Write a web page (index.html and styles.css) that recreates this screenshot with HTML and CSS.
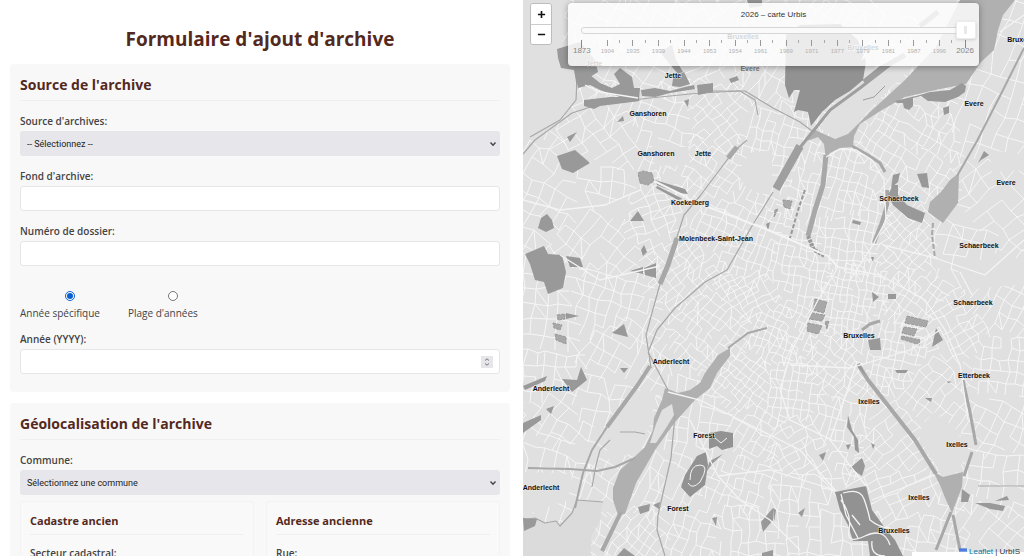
FILE: index.html
```html
<!DOCTYPE html>
<html lang="fr">
<head>
<meta charset="utf-8">
<title>Formulaire d'ajout d'archive</title>
<link rel="stylesheet" href="styles.css">
</head>
<body>
<main class="layout">
  <form class="form-pane">
    <h1 class="page-title">Formulaire d'ajout d'archive</h1>

    <section class="card">
      <h2 class="card-title">Source de l'archive</h2>
      <div class="field">
        <label for="source">Source d'archives:</label>
        <span class="select-box"><select id="source"><option>-- Sélectionnez --</option></select>
          <svg class="chevron" viewBox="0 0 8 6" aria-hidden="true"><path d="M1.5 1.5 4 4.2 6.5 1.5"/></svg></span>
      </div>
      <div class="field">
        <label for="fond">Fond d'archive:</label>
        <input id="fond" type="text">
      </div>
      <div class="field">
        <label for="dossier">Numéro de dossier:</label>
        <input id="dossier" type="text">
      </div>
      <div class="radios">
        <label class="radio"><input type="radio" name="annee-type" checked>Année spécifique</label>
        <label class="radio"><input type="radio" name="annee-type">Plage d'années</label>
      </div>
      <div class="field">
        <label for="annee">Année (YYYY):</label>
        <span class="number-box"><input id="annee" type="number">
          <svg class="spinner" viewBox="0 0 12 12" aria-hidden="true"><path d="M4 4.5 6 2.8 8 4.5M4 7.5 6 9.2 8 7.5"/></svg></span>
      </div>
    </section>

    <section class="card">
      <h2 class="card-title">Géolocalisation de l'archive</h2>
      <div class="field field-tight">
        <label for="commune">Commune:</label>
        <span class="select-box"><select id="commune"><option>Sélectionnez une commune</option></select>
          <svg class="chevron" viewBox="0 0 8 6" aria-hidden="true"><path d="M1.5 1.5 4 4.2 6.5 1.5"/></svg></span>
      </div>
      <div class="columns">
        <section class="subcard">
          <h3 class="subcard-title">Cadastre ancien</h3>
          <div class="field">
            <label for="secteur">Secteur cadastral:</label>
            <input id="secteur" type="text">
          </div>
        </section>
        <section class="subcard">
          <h3 class="subcard-title">Adresse ancienne</h3>
          <div class="field">
            <label for="rue">Rue:</label>
            <input id="rue" type="text">
          </div>
        </section>
      </div>
    </section>
  </form>

  <section class="map-pane" aria-label="Carte">
    <svg class="map" viewBox="523 0 501 556" preserveAspectRatio="xMinYMin slice">
      <g id="streets" class="streets"></g>
      <g class="blank">
        <path d="M523 0H566L562 40 574 70 577 100 560 120 535 140H523z"/>
        <path d="M737 173 750 153 772 150 772 190 762 195 745 186z"/>
        <path d="M603 205 625 197 633 208 622 222 604 215z"/>
        <path d="M652 147 688 147 690 165 655 166z"/>
        <path d="M990 150 1024 155 1024 170 992 172z"/>
        <path d="M922 425 934 412 955 428 968 450 958 472 940 472 920 440z"/>
        <path d="M958 270 1002 250 1024 262V284L962 290z"/>
        <path d="M820 128 838 100 868 82 902 52 952 2H962L948 30 910 70 880 98 850 132 838 139z"/>
        <path d="M602 430 642 388 656 393 650 425 640 449 610 462z"/>
        <path d="M523 472 572 474 568 500 523 516z"/>
      </g>
      <path class="outside" d="M518 521 535 518 545 523 556 521 560 526 572 513 577 500 603 502 600 520 592 535 590 560H518z"/>

      <g class="yard">
        <path d="M960 0H1015L1003 15 998 30 994 50 981 62 966 84 940 89 905 97 882 110 860 124 854 136 853 147 840 148 830 153 826 160 824 144 818 137 807 141 815 130 835 139 848 134 870 112 905 80 935 48 950 20z"/>
        <path d="M959 173 958 203 943 223 928 212 930 202 941 192 950 180z"/>
        <path d="M730 348 718 355 705 373 700 383 690 390 678 393 665 388 662 400 654 418 653 430 645 447 628 463 620 470 613 488 613 500 618 515 625 514 630 500 636 483 655 450 675 422 695 400 710 388 717 373 730 356z"/>
        <path d="M933 471 943 477 963 472 962 487 952 513 946 500 940 485z"/>
      </g>
      <path class="hole" d="M672 404 674 415 666 428 656 443 650 443 656 424 662 410z"/>

      <g class="rail">
        <path d="M523 154 535 140 572 113 600 104 650 98 700 93 740 91 755 100 758 115"/>
        <path d="M577 80 576 100 560 120 530 137"/>
        <path d="M700 91 745 91 773 108 800 122 812 131"/>
        <path d="M747 140 733 152 700 196 684 215 676 240 660 284 650 320 646 335 648 348 651 368"/>
        <path d="M773 192 752 226 727 270 705 282 675 308 657 330 649 350"/>
        <path class="w2" d="M728 348 748 333 767 328"/>
        <path class="w5" d="M677 238 668 265 660 284"/>
        <path class="w5" d="M737 147 728 158"/>
        <path class="w5" d="M826 155 823 185 815 210 808 236"/>
        <path class="w4 dark" d="M808 236 814 250 825 256"/>
        <path class="w3" d="M852 146 868 155 880 163 885 172"/>
        <path class="w4" d="M887 190 887 205 882 222 874 243"/>
        <path class="w2" d="M957 176 977 141 1003 90 1024 48"/>
        <path class="w2 dash" d="M933 223 932 235 935 258"/>
        <path class="w4" d="M650 366 637 386 607 427"/>
        <path class="w2" d="M607 427 592 450 583 473 575 508"/>
        <path class="w2" d="M528 468 570 469 597 471 615 467 635 458"/>
        <path class="w4" d="M621 512 602 551"/>
        <path d="M648 352 668 390"/>
        <path d="M675 415 671 458 658 515 657 530 665 556"/>
        <path d="M518 521 535 518 545 523 556 521 560 526 572 513 577 500 603 502"/>
        <path d="M620 432 635 432 645 434M610 440 600 450 596 465 592 487"/>
        <path class="w4" d="M858 364 868 380 890 408 915 440 936 474"/>
        <path class="w3" d="M963 380 970 412 976 445M972 452 964 476"/>
        <path class="w3" d="M951 512 936 550M953 515 960 550"/>
        <path d="M978 486 1024 486"/>
        <path class="w3" d="M862 330 870 324 880 321"/>
        <path d="M790 42 830 60 850 66"/>
      </g>
      <g class="water">
        <path d="M800 146 776 189" stroke-width="8"/>
        <path d="M864 82 880 69 905 55" stroke-width="5"/>
        <path d="M938 12 920 26" stroke-width="5"/>
        <path d="M900 57 860 88 830 110 806 140 798 150" stroke-width="3"/>
        <path d="M863 100 874 97 885 86" stroke-width="1"/>
      </g>

      <g class="park">
        <path d="M557 49 580 42 595 60 598 72 590 77 579 77 577 88 574 70 561 68 558 58z"/>
        <path d="M578 77 590 75 600 83 612 88 620 84 614 74 620 68 632 77 634 88 640 88 639 100 620 97 600 90 590 85 578 88z"/>
        <path d="M584 100 610 97 635 97 640 101 600 106 594 109 584 106z"/>
        <path d="M641 90 655 88 670 91 685 87 694 85 695 89 670 93 655 97 642 96z"/>
        <path d="M697 85 713 83V92L698 95z"/>
        <path d="M673 78 684 72 690 84 680 87 672 86z"/>
        <path d="M660 52 672 45 676 60 683 72 678 74 668 62z"/>
        <path d="M747 0H762V6L750 8z"/>
        <path d="M729 79 737 76 739 80 731 83zM684 101 689 99 688 107zM617 122 623 116 624 121zM567 137 577 132 570 142z"/>
        <path class="deep" d="M786 35 800 25 840 24 858 40 866 62 863 80 850 91 835 100 822 112 811 126 808 112 798 110 794 112 800 90 794 90 789 98 785 85z"/>
        <path d="M895 101 920 95 930 92 950 90 962 83 966 86 965 92 958 97 945 102 928 101 921 96 913 98 913 106 909 110 904 108 903 103 897 103z"/>
        <path d="M943 108 949 106 949 113 944 115z"/>
        <path d="M557 156 575 150 590 163 573 173 562 169z"/>
        <path d="M541 218 547 214 552 220 554 228 546 232 538 228z"/>
        <path d="M525 254 544 246 548 254 562 255 566 272 563 288 548 294 544 282 535 280 530 264z"/>
        <path d="M566 256 580 258 583 267 570 267z"/>
        <path d="M630 221 638 211 644 221zM641 250 644 245 647 252 643 256zM630 271 643 267V274zM644 268 656 263V278L645 275z"/>
        <path d="M612 333 624 324 628 337z"/>
        <path d="M566 313 579 316 566 319z"/>
        <path d="M655 180 685 189 688 194 678 193 657 185z"/>
        <path d="M657 186 683 199 678 200 656 188z"/>
        <path d="M893 185 898 185 898 195 907 205 925 213 922 223 908 218 893 205 888 195z"/>
        <path d="M917 174 927 173 929 188 922 187zM893 175 900 173 898 182 891 188z"/>
        <path d="M978 163 984 151 989 155 981 160z"/>
        <path d="M853 220 861 222 860 225 852 223zM766 224 770 222 768 231zM871 257 874 257 873 262z"/>
        <path d="M872 292 879 297 873 302zM888 294 896 294 896 299 888 299z"/>
        <path d="M868 340 880 338 881 350 870 350zM936 328 943 340 932 347z"/>
        <path d="M562 379 577 380 581 367 587 380 572 392z"/>
        <path d="M523 386 547 376 545 381 525 390zM523 423 541 415 541 420 523 433zM546 409 554 406 551 414zM620 368 628 368 624 373z"/>
        <path class="deep" d="M709 433 721 431 733 433 733 447 722 450 717 446 709 449z"/>
        <path class="deep" d="M697 456 706 452 708 465 705 485 690 497 681 487 685 475z"/>
        <path d="M706 472 710 461 723 454 713 463z"/>
        <path d="M638 507 650 504 649 511 640 514zM653 505 660 502 659 509zM712 518 717 517 716 526z"/>
        <path d="M523 518 537 519 535 526 524 531zM761 522 773 508V520L763 532zM762 553 773 550V556H762zM617 556 624 548 635 556z"/>
        <path d="M857 366 861 366 866 376zM895 370 908 370 906 373 897 373zM925 398 932 398 931 402zM947 381 952 382 948 383z"/>
        <path d="M848 415 852 430 858 440 859 453 855 450 854 437 847 427z"/>
        <path d="M819 455 826 452 823 461zM846 445 851 444 848 450zM871 443 875 445 873 449zM850 468 862 458 865 466 862 476z"/>
        <path class="deep" d="M835 492 866 486 872 510 885 528 895 540 903 556H870L868 541 853 541 848 525 840 510z"/>
        <path d="M975 503 990 503 1005 506 1003 511 990 509zM962 489 970 495 968 502 961 502zM995 501 1007 496 1009 500zM798 513 805 508 802 517zM773 508 776 510 774 522z"/>
      </g>
      <g class="fine">
        <path d="M638 173 643 171 652 173 654 181 648 185 640 183z"/>
        <path d="M783 200 792 201 790 209 784 207zM775 210 778 209 774 217z"/>
        <path d="M805 190 799 207 790 238" class="line"/>
        <path d="M815 299 827 302 824 313 813 310zM812 313 825 315 822 321 809 319zM808 323 822 326 818 334 807 331zM825 322 829 321 827 329z"/>
        <path d="M907 316 928 321 926 327 905 323zM904 327 917 329 914 336 902 333zM902 336 920 340 920 345 901 339z"/>
        <path d="M557 315 565 314V319L558 320zM553 323 562 325 560 330 554 328zM555 334 566 337V344L556 340z"/>
      </g>
      <g class="avenues">
        <path d="M654 181 685 196 690 200 768 230 828 256 838 267" stroke-width="2"/>
        <path d="M870 0 885 15 862 60M1024 15 1000 32"/>
        <path d="M826 157 840 149 856 150 872 160 884 180 886 220 873 245 850 280"/>
        <path d="M838 267 818 300 792 350 780 390 790 420 832 440"/>
        <path d="M838 267 880 275 925 300 945 330 960 365 968 420"/>
        <path d="M883 245 935 258 985 275 1024 240M960 272 972 295"/>
        <path d="M790 365 850 368 910 350 940 330"/>
        <path d="M668 392 700 400 740 420 800 450 835 490"/>
        <path d="M718 476 740 500 770 520 800 550M718 476 690 420M718 476 770 470 835 490"/>
        <path d="M841 494 846 515 858 538M843 493Q860 488 864 499T870 520Q880 528 890 528M841 500Q852 515 849 530T865 536 890 545" />
        <path d="M866 486 830 440 857 362M872 500 935 475M523 200 560 210 605 205 640 190M560 255 600 280 660 266"/>
        <path d="M690 480Q690 465 700 465T700 482Q692 490 688 483M715 438 721 443 727 438" stroke-width="1"/>
        <path d="M860 525 852 515M872 541Q870 556 885 556M585 85 600 92 638 98"/>
      </g>

      <g class="places">
        <text x="743" y="39">Bruxelles</text><text x="863" y="50">Bruxelles</text>
        <text x="594" y="66">Jette</text><text x="750" y="71" class="faint">Evere</text>
        <text x="673" y="78">Jette</text><text x="648" y="116">Ganshoren</text>
        <text x="656" y="156">Ganshoren</text><text x="703" y="156">Jette</text>
        <text x="690" y="205">Koekelberg</text><text x="716" y="241">Molenbeek-Saint-Jean</text>
        <text x="1023" y="42">Bruxelles</text><text x="974" y="106">Evere</text>
        <text x="1006" y="185">Evere</text><text x="899" y="201">Schaerbeek</text>
        <text x="979" y="248">Schaerbeek</text><text x="973" y="305">Schaerbeek</text>
        <text x="859" y="338">Bruxelles</text><text x="671" y="364">Anderlecht</text>
        <text x="551" y="391">Anderlecht</text><text x="541" y="490">Anderlecht</text>
        <text x="974" y="378">Etterbeek</text><text x="869" y="404">Ixelles</text>
        <text x="957" y="447">Ixelles</text><text x="919" y="500">Ixelles</text>
        <text x="704" y="438">Forest</text><text x="678" y="511">Forest</text>
        <text x="894" y="533">Bruxelles</text>
      </g>
    </svg>

    <div class="zoom-control">
      <button type="button" aria-label="Zoom avant"><svg viewBox="0 0 10 10"><path d="M1 5H9M5 1V9"/></svg></button>
      <button type="button" aria-label="Zoom arrière"><svg viewBox="0 0 10 10"><path d="M1 5H9"/></svg></button>
    </div>

    <div class="timeline">
      <label class="timeline-title" for="year">2026 – carte Urbis</label>
      <div class="slider">
        <span class="slider-rail"></span>
        <input id="year" type="range" min="0" max="15" value="15">
      </div>
      <ol class="ticks">
        <li class="end">1873</li><li>1904</li><li>1935</li><li>1939</li><li>1944</li><li>1953</li><li>1954</li><li>1961</li><li>1969</li><li>1971</li><li>1977</li><li>1979</li><li>1981</li><li>1987</li><li>1996</li><li class="end">2026</li>
      </ol>
    </div>

    <div class="attribution">
      <svg viewBox="0 0 12 8" aria-hidden="true"><path fill="#4c7be1" d="M0 0H12V5H0z"/></svg>
      <a href="#leaflet">Leaflet</a> | UrbIS
    </div>
  </section>
</main>
<script src="streets.js"></script>
</body>
</html>
```

FILE: styles.css
```css
* { box-sizing: border-box; }

body {
  margin: 0;
  background: #fff;
  color: #444;
  font: 10px/13px "Open Sans", "Noto Sans", sans-serif;
}

.layout {
  display: grid;
  grid-template-columns: 523fr 501fr;
  height: 100vh;
  overflow: hidden;
}

/* Form */
.form-pane {
  display: flex;
  flex-direction: column;
  gap: 11px;
  min-width: 0;
  padding: 25px 13px 0 10px;
  overflow-y: auto;
  scrollbar-width: none;
}

.page-title {
  margin: 0;
  color: #54291d;
  font-size: 19px;
  font-weight: 700;
  line-height: 28px;
  text-align: center;
}

.card {
  flex: none;
  padding: 10px 10px 18px;
  border-radius: 4px;
  background: #f8f8f8;
}

.card-title {
  margin: 0 0 14px;
  padding-bottom: 5px;
  border-bottom: 1px solid #efefef;
  color: #54291d;
  font-size: 14px;
  font-weight: 700;
  line-height: 21px;
}

.field { display: grid; gap: 3px; margin-bottom: 14px; }
.field > label { font-weight: 600; }
.card > .field:last-child { margin-bottom: 0; }
.card > .field-tight { margin-bottom: 6px; }

input[type="text"],
input[type="number"],
select {
  display: block;
  width: 100%;
  height: 25px;
  margin: 0;
  padding: 0 6px;
  border: 1px solid #e6e6e6;
  border-radius: 3px;
  background: #fff;
  color: #222;
  font: 9px Roboto, "Open Sans", sans-serif;
  appearance: none;
}

input[type="number"] { appearance: textfield; }

input[type="number"]::-webkit-inner-spin-button { display: none; }

select {
  border-color: #e5e5ea;
  background: #e7e7eb;
}

.select-box,
.number-box { display: grid; align-items: center; }

.select-box > *,
.number-box > * { grid-area: 1 / 1; }

.chevron,
.spinner { justify-self: end; pointer-events: none; fill: none; }

.chevron { width: 8px; margin-right: 3px; stroke: #444; stroke-width: 1.4; }

.spinner {
  width: 12px;
  height: 12px;
  margin-right: 7px;
  background: #e6e6ea;
  stroke: #777;
}

.radios { display: flex; gap: 28px; margin: 25px 0 13px; }

.radio { display: grid; gap: 6px; justify-items: center; }

.radio input { width: 10px; height: 10px; margin: 0 0 0 20px; accent-color: #0a60d0; }

.columns { display: grid; grid-template-columns: 1fr 1fr; gap: 12px; }

.subcard {
  padding: 9px;
  border: 1px solid #f3f3f3;
  border-radius: 3px;
  background: #f9f9f9;
}

.subcard-title {
  margin: 0 0 12px;
  padding-bottom: 4px;
  border-bottom: 1px solid #efefef;
  color: #54291d;
  font-size: 11px;
  font-weight: 700;
  line-height: 19px;
}

/* Map */
.map-pane { position: relative; min-width: 0; overflow: hidden; background: #e0e0e0; }

.map { display: block; width: 100%; height: 100%; }

.streets { fill: none; stroke: #f6f6f6; stroke-width: 1; }
.blank, .hole { fill: #e0e0e0; }
.outside { fill: #dbdbdb; }
.yard { fill: #b0b0b0; }
.rail { fill: none; stroke: #a8a8a8; stroke-width: 1.2; stroke-linejoin: round; }
.rail .w2 { stroke-width: 2; }
.rail .w3 { stroke-width: 3; }
.rail .w4 { stroke-width: 4; }
.rail .w5 { stroke-width: 5; }
.rail .dash { stroke-dasharray: 5 2; }
.rail .dark { stroke: #999; stroke-dasharray: 3 1; }
.water { fill: none; stroke: #9f9f9f; }
.park { fill: #999; }
.park .deep { fill: #929292; }
.fine { fill: #a8a8a8; stroke: #999; stroke-dasharray: 3 1; }
.fine .line { fill: none; stroke-width: 2; stroke-dasharray: 4 2; }
.avenues { fill: none; stroke: #f4f4f4; stroke-width: 1.3; }

.places {
  fill: #111;
  stroke: #e8e8e8;
  stroke-width: 1;
  paint-order: stroke;
  font: bold 7px "Liberation Sans", Arial, sans-serif;
  text-anchor: middle;
}

.places .faint { fill: #777; }

.zoom-control {
  position: absolute;
  top: 3px;
  left: 7px;
  display: grid;
  border: 1px solid #bdbdbd;
  border-radius: 3px;
  overflow: hidden;
}

.zoom-control button {
  display: grid;
  place-items: center;
  width: 20px;
  height: 20px;
  padding: 0;
  border: 0;
  background: #fff;
}

.zoom-control button + button { border-top: 1px solid #ccc; }

.zoom-control svg { width: 9px; height: 9px; stroke: #111; stroke-width: 1.8; }

.timeline {
  position: absolute;
  top: 3px;
  left: 9%;
  right: 9%;
  padding: 6px 13px 11px;
  border-radius: 4px;
  background: rgba(255, 255, 255, 0.82);
  box-shadow: 0 1px 6px rgba(0, 0, 0, 0.35);
  font-family: "Liberation Sans", Arial, sans-serif;
}

.timeline-title {
  display: block;
  color: #333;
  font-size: 8px;
  line-height: 12px;
  text-align: center;
}

.slider { display: grid; align-items: center; height: 18px; }

.slider > * { grid-area: 1 / 1; }

.slider-rail {
  height: 7px;
  border: 1px solid #d6d6d6;
  border-radius: 3px;
  background: #fafafa;
}

.slider input {
  width: calc(100% + 20px);
  height: 18px;
  margin: 0 -10px;
  background: transparent;
  appearance: none;
}

.slider input::-webkit-slider-thumb {
  width: 20px;
  height: 18px;
  border: 1px solid #ececec;
  border-radius: 2px;
  background: linear-gradient(#e8e8e8, #e8e8e8) center / 3px 8px no-repeat #fff;
  box-shadow: 0 1px 3px rgba(0, 0, 0, 0.15);
  appearance: none;
}

.ticks {
  display: flex;
  justify-content: space-between;
  margin: 0 -12px;
  padding: 1px 0 0;
  list-style: none;
  color: #b2b2b2;
  font-size: 6px;
  line-height: 8px;
}

.ticks li {
  flex: 1;
  padding-top: 7px;
  background:
    linear-gradient(#999, #999) center top / 1px 6px no-repeat,
    linear-gradient(#aaa, #aaa) right top / 1px 3px no-repeat;
  text-align: center;
}

.ticks .end {
  background:
    linear-gradient(#888, #888) center top / 1px 8px no-repeat;
  color: #888;
  font-size: 8px;
}

.attribution {
  position: absolute;
  right: 0;
  bottom: -2px;
  padding: 0 4px 0 47px;
  background: linear-gradient(#fff, #fff) bottom / 100% 6px no-repeat;
  color: #333;
  font: 8px/12px "Liberation Sans", Arial, sans-serif;
}

.attribution svg { width: 8px; height: 6px; }
.attribution a { color: #0078a8; text-decoration: none; }
```

FILE: streets.js
```js
// Builds the street network: one rotated, jittered grid for each district.
(function () {
  var seed = 7;
  function rnd() {
    seed = (seed * 16807) % 2147483647;
    return seed / 2147483647;
  }

  // x, y, angle in degrees, block size
  var districts = [
    [545, 185, 30, 12], [600, 180, 10, 12], [610, 135, 55, 11], [665, 125, 20, 10], [720, 115, 48, 8],
    [765, 130, 15, 8], [640, 40, 30, 13], [720, 40, 60, 12], [765, 70, 35, 10], [600, 235, 40, 11], [545, 320, 5, 12],
    [600, 300, 15, 10], [620, 345, 30, 10], [660, 210, 70, 8], [700, 175, 35, 8], [720, 220, 25, 8],
    [690, 265, 50, 7], [745, 250, 20, 7], [750, 290, 60, 6], [790, 265, 12, 7], [720, 320, 40, 7],
    [780, 330, 25, 6], [840, 190, 15, 8], [850, 230, 8, 8], [900, 160, 35, 9], [910, 245, 45, 7],
    [860, 290, 10, 6], [910, 290, 35, 7], [960, 240, 15, 12], [1000, 200, 50, 13], [990, 110, 20, 14],
    [920, 120, 30, 8], [1005, 300, 28, 10], [960, 325, 60, 8], [890, 350, 12, 7], [840, 370, 40, 7],
    [790, 390, 8, 7], [745, 385, 40, 6], [1000, 360, 5, 9], [940, 390, 40, 9], [1005, 420, 25, 11],
    [895, 435, 50, 9], [840, 420, 15, 8], [800, 440, 60, 8], [755, 430, 30, 8], [700, 420, 12, 10],
    [745, 480, 20, 8], [790, 500, 5, 10], [740, 530, 3, 9], [645, 530, 40, 8], [690, 530, 20, 9],
    [640, 480, 30, 12], [560, 420, 35, 11], [600, 395, 15, 12], [545, 450, 20, 12], [535, 365, 5, 10],
    [900, 500, 65, 9], [930, 530, 15, 10], [990, 530, 40, 12], [820, 540, 5, 11], [1005, 470, 10, 12]
  ];

  function owner(x, y) {
    var best = 0, min = 1e9;
    districts.forEach(function (d, i) {
      var q = (d[0] - x) * (d[0] - x) + (d[1] - y) * (d[1] - y);
      if (q < min) { min = q; best = i; }
    });
    return best;
  }

  var path = "";
  districts.forEach(function (d, i) {
    var a = d[2] * Math.PI / 180, c = Math.cos(a), s = Math.sin(a), step = d[3], n = 8, nodes = {};
    for (var u = -n; u <= n; u++) {
      for (var v = -n; v <= n; v++) {
        var px = u * step + (rnd() - 0.5) * step * 0.4;
        var py = v * step * 1.3 + (rnd() - 0.5) * step * 0.4;
        nodes[u + "," + v] = [Math.round(d[0] + px * c - py * s), Math.round(d[1] + px * s + py * c)];
      }
    }
    function link(p, q, chance) {
      if (!p || !q || rnd() > chance || owner(p[0], p[1]) !== i) return;
      path += "M" + p.join(" ") + "L" + q.join(" ");
    }
    for (u = -n; u <= n; u++) {
      for (v = -n; v <= n; v++) {
        var p = nodes[u + "," + v];
        link(p, nodes[(u + 1) + "," + v], 0.85);
        link(p, nodes[u + "," + (v + 1)], 0.85);
        link(p, nodes[(u + 1) + "," + (v + 1)], 0.12);
      }
    }
  });

  var el = document.createElementNS("http://www.w3.org/2000/svg", "path");
  el.setAttribute("d", path);
  document.getElementById("streets").appendChild(el);
})();
```
